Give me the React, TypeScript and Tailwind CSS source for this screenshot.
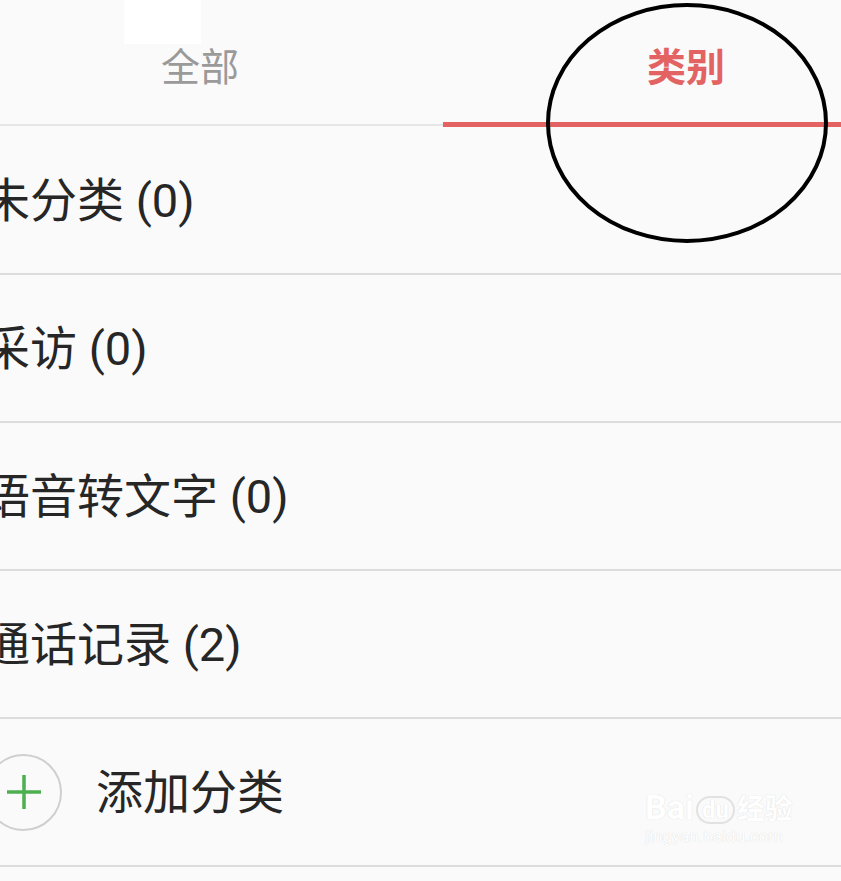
const categories = [
  { name: '未分类', count: 0 },
  { name: '采访', count: 0 },
  { name: '语音转文字', count: 0 },
  { name: '通话记录', count: 2 },
];

const font = { fontFamily: "Roboto, 'Noto Sans CJK SC', sans-serif" };

export default function App() {
  return (
    <div
      className="relative w-full h-[881px] overflow-hidden bg-[#fafafa] text-[#262626]"
      style={font}
    >
      {/* tabs */}
      <div className="flex items-start">
        <div className="relative w-[443px] h-[126px] border-b-2 border-[#e6e6e6]">
          <div className="absolute left-[124px] top-0 w-[77px] h-[44px] bg-white" />
          <div className="w-[400px] pt-[46px] text-center text-[39px] leading-[44px] text-[#9a9a9a]">
            全部
          </div>
        </div>
        <div className="flex-1 h-[127px] border-b-[5px] border-[#e36363]">
          <div className="pl-[88px] pt-[46px] text-center text-[39px] leading-[44px] font-bold text-[#e36363]">
            类别
          </div>
        </div>
      </div>

      {/* category list */}
      <div className="flex flex-col">
        {categories.map((c) => (
          <div
            key={c.name}
            className="flex items-center h-[148px] border-b-2 border-[#dcdcdc]"
          >
            <span className="ml-[-17px] whitespace-nowrap text-[47px] leading-none">
              {c.name} ({c.count})
            </span>
          </div>
        ))}
        <div className="flex items-center h-[148px] border-b-2 border-[#dcdcdc]">
          <div className="ml-[-15px] flex items-center justify-center w-[77px] h-[77px] shrink-0 rounded-full border-2 border-[#cfcfcf]">
            <svg width="34" height="34" viewBox="0 0 34 34">
              <path d="M17 0v34M0 17h34" stroke="#4caf50" strokeWidth="3.5" />
            </svg>
          </div>
          <span className="ml-[34px] whitespace-nowrap text-[47px] leading-none">
            添加分类
          </span>
        </div>
      </div>

      {/* hand-drawn ellipse annotation */}
      <svg
        className="absolute left-[544px] top-0 pointer-events-none"
        width="287"
        height="246"
        viewBox="0 0 287 246"
      >
        <ellipse
          cx="143"
          cy="123"
          rx="139"
          ry="118"
          fill="none"
          stroke="#000"
          strokeWidth="4"
        />
      </svg>

      {/* watermark */}
      <div className="absolute left-[645px] top-[790px] flex flex-col items-start pointer-events-none select-none">
        <div className="flex items-end gap-[2px] text-[34px] leading-none font-bold text-white [text-shadow:0_0_1px_#cfcfcf]">
          <span>Bai</span>
          <span className="text-[24px] rounded-full border-2 border-[#e2e2e2] px-[4px]">du</span>
          <span className="text-[28px]">经验</span>
        </div>
        <div className="mt-[4px] text-[17px] leading-none text-white [text-shadow:0_0_1px_#cfcfcf]">
          jingyan.baidu.com
        </div>
      </div>
    </div>
  );
}
